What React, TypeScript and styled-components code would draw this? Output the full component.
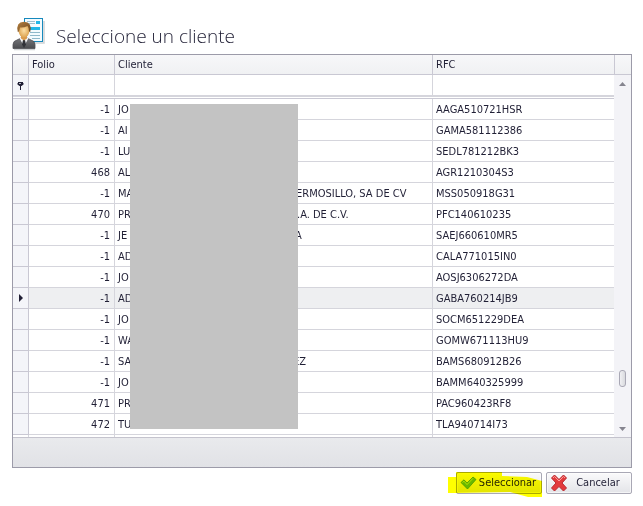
import React from "react";
import styled, { createGlobalStyle } from "styled-components";

const Global = createGlobalStyle`
  * { box-sizing: border-box; }
  body {
    margin: 0;
    background: #fff;
    color: #201f35;
    font-family: "DejaVu Sans Condensed", "DejaVu Sans", sans-serif;
    font-size: 11px;
    line-height: 14px;
  }
`;

const Dialog = styled.main`
  padding: 16px 11px 12px 12px;
`;

const Header = styled.header`
  display: flex;
  align-items: center;
  gap: 11px;
  height: 38px;
`;

const Title = styled.h1`
  margin: 2px 0 0;
  font-family: "Open Sans", "Noto Sans", sans-serif;
  font-weight: 300;
  font-size: 19px;
  line-height: 24px;
`;

const Frame = styled.section`
  position: relative;
  border: 1px solid #9c9ba9;
`;

const GridArea = styled.div`
  display: flex;
`;

const Table = styled.table`
  flex: 1;
  min-width: 0;
  border-collapse: separate;
  border-spacing: 0;
  table-layout: fixed;
`;

const Col = styled.col<{ $w?: number }>`
  width: ${(p) => (p.$w ? `${p.$w}px` : "auto")};
`;

const HeadCell = styled.th`
  height: 20px;
  padding: 0 3px;
  text-align: left;
  font-weight: 400;
  background: linear-gradient(#f7f7f9, #f0f1f3);
  border-right: 1px solid #c9c8d3;
  border-bottom: 1px solid #c9c8d3;

  &:last-child { border-right: 0; }
`;

const Cell = styled.td<{ $right?: boolean }>`
  height: 21px;
  padding: 2px 4px 0 3px;
  text-align: ${(p) => (p.$right ? "right" : "left")};
  white-space: pre;
  overflow: hidden;
  border-right: 1px solid #d5d5dc;
  border-bottom: 1px solid #d5d5dc;

  &:last-child { border-right: 0; }
`;

const Marker = styled.td`
  height: 21px;
  padding: 0;
  text-align: center;
  background: #f4f5f9;
  border-right: 1px solid #c9c8d3;
  border-bottom: 1px solid #c9c8d3;

  svg { display: block; margin: 0 auto; }
`;

const Row = styled.tr<{ $current?: boolean }>`
  background: ${(p) => (p.$current ? "#eeeff1" : "#fff")};
`;

const Divider = styled.td`
  height: 3px;
  padding: 0;
  border-top: 1px solid #d5d5dc;
  border-bottom: 1px solid #c9c8d3;
`;

const Tail = styled.td`
  height: 2px;
  padding: 0;
  border-right: 1px solid #d5d5dc;

  &:last-child { border-right: 0; }
`;

const FilterInput = styled.input`
  display: block;
  width: 100%;
  height: 18px;
  padding: 0;
  border: 0;
  outline: 0;
  background: transparent;
  font: inherit;
  color: inherit;
`;

const Lead = styled.span<{ $w: number }>`
  display: inline-block;
  width: ${(p) => p.$w}px;
`;

const Scroll = styled.div`
  display: flex;
  flex-direction: column;
  width: 17px;
  background: #f3f3f7;
`;

const ScrollHead = styled.div`
  height: 20px;
  background: linear-gradient(#f7f7f9, #f0f1f3);
  border-left: 1px solid #c9c8d3;
  border-bottom: 1px solid #c9c8d3;
`;

const ScrollButton = styled.button`
  display: flex;
  align-items: center;
  justify-content: center;
  height: 17px;
  padding: 0;
  border: 0;
  background: transparent;
`;

const Track = styled.div`
  flex: 1;
  display: flex;
  flex-direction: column;
  align-items: center;
  justify-content: flex-end;
  padding-bottom: 33px;
`;

const Thumb = styled.div`
  width: 7px;
  height: 17px;
  border: 1px solid #a9a8b5;
  border-radius: 3px;
  background: linear-gradient(90deg, #f0f0f3, #d9dade);
`;

const Footer = styled.div`
  height: 30px;
  border-top: 1px solid #c4c3cd;
  background: linear-gradient(#e9eaed, #e1e2e6);
`;

const Redaction = styled.div`
  position: absolute;
  top: 49px;
  left: 117px;
  width: 168px;
  height: 325px;
  background: #c3c3c3;
`;

const Actions = styled.div`
  position: relative;
  display: flex;
  justify-content: flex-end;
  gap: 4px;
  margin-top: 4px;
`;

const Button = styled.button`
  display: flex;
  align-items: center;
  width: 86px;
  height: 22px;
  padding: 0 3px;
  border: 1px solid #a9a8b5;
  border-radius: 2px;
  background: linear-gradient(#fafafb, #e3e4e8);
  box-shadow: inset 0 0 0 1px #ffffff99;
  color: inherit;
  font: inherit;

  svg { flex: none; }
`;

const Label = styled.span`
  flex: 1;
  text-align: center;
  white-space: nowrap;
`;

const Marking = styled.svg`
  position: absolute;
  right: 89px;
  top: 0;
  mix-blend-mode: multiply;
  pointer-events: none;
`;

type Client = { folio: string; start: string; end?: string; lead?: number; rfc: string; current?: boolean };

const clients: Client[] = [
  { folio: "-1", start: "JO", rfc: "AAGA510721HSR" },
  { folio: "-1", start: "AI", rfc: "GAMA581112386" },
  { folio: "-1", start: "LU", rfc: "SEDL781212BK3" },
  { folio: "468", start: "AL", rfc: "AGR1210304S3" },
  { folio: "-1", start: "MA", end: "ERMOSILLO, SA DE CV", lead: 178, rfc: "MSS050918G31" },
  { folio: "470", start: "PR", end: ".A. DE C.V.", lead: 179, rfc: "PFC140610235" },
  { folio: "-1", start: "JE", end: "A", lead: 177, rfc: "SAEJ660610MR5" },
  { folio: "-1", start: "AD", rfc: "CALA771015IN0" },
  { folio: "-1", start: "JO", rfc: "AOSJ6306272DA" },
  { folio: "-1", start: "AD", rfc: "GABA760214JB9", current: true },
  { folio: "-1", start: "JO", rfc: "SOCM651229DEA" },
  { folio: "-1", start: "WA", rfc: "GOMW671113HU9" },
  { folio: "-1", start: "SA", end: "EZ", lead: 175, rfc: "BAMS680912B26" },
  { folio: "-1", start: "JO", rfc: "BAMM640325999" },
  { folio: "471", start: "PR", rfc: "PAC960423RF8" },
  { folio: "472", start: "TU", rfc: "TLA940714I73" },
];

const ClientIcon = () => (
  <svg width="33" height="34" viewBox="0 0 33 34" aria-hidden="true">
    <defs>
      <linearGradient id="suit" x1="0" y1="0" x2="0" y2="1">
        <stop offset="0" stopColor="#77787c" />
        <stop offset="1" stopColor="#4b4c50" />
      </linearGradient>
      <linearGradient id="hair" x1="0" y1="0" x2="1" y2="1">
        <stop offset="0" stopColor="#b5803f" />
        <stop offset="1" stopColor="#6b451d" />
      </linearGradient>
      <radialGradient id="face">
        <stop offset="0" stopColor="#fde0a6" />
        <stop offset="1" stopColor="#dda452" />
      </radialGradient>
    </defs>
    <path d="M2 31.500h21M14 25h18V3" stroke="#cfd2d4" strokeWidth="1.500" fill="none" />
    <rect x="12.500" y=".5" width="18" height="23" fill="#f4fbfe" stroke="#1689bd" />
    <path d="M15 3.500h8M15 5.500h8" stroke="#9fbfcd" />
    <rect x="24" y="3" width="4" height="3" fill="#21b6e7" />
    <rect x="15" y="9" width="13" height="3" fill="#21b6e7" />
    <path d="M18 14.500h10M18 17.500h10M20 20.500h8" stroke="#8fb9ca" />
    <path d="M1 30.500v-4q0-3.500 4-4.500l4-2h6l4 2q4 1 4 4.500v4z" fill="url(#suit)" stroke="#505155" strokeWidth=".8" />
    <path d="M7.500 20l4.500 8.500 4.500-8.500z" fill="#f5f6f8" />
    <path d="M11 22h2l1 4.500-2 3.500-2-3.500z" fill="#303238" />
    <path d="M9 17h6v3.500l-3 2-3-2z" fill="#d99b4d" />
    <ellipse cx="12" cy="12.500" rx="5.500" ry="7" fill="url(#face)" />
    <path d="M5.800 14Q3.500 4 12 3.800 20.500 4 18.200 14l-1.200-.5q.2-3.500-1.500-5.500-4 2-7.500 1.500l-1 4z" fill="url(#hair)" />
  </svg>
);

const FilterIcon = () => (
  <svg width="7" height="9" viewBox="0 0 7 9" aria-hidden="true">
    <path d="M1 1h5v1h.5v1.500L4.500 5H4v4H3V5h-.5L.5 3.500V2H1z" fill="#201f35" />
    <path d="M2 2h2v1H2z" fill="#b9b9c4" />
  </svg>
);

const CurrentIcon = () => (
  <svg width="4" height="8" viewBox="0 0 4 8" aria-hidden="true">
    <path d="M0 0l4 4-4 4z" fill="#201f35" />
  </svg>
);

const Caret = ({ down }: { down?: boolean }) => (
  <svg width="7" height="4" viewBox="0 0 7 4" aria-hidden="true">
    <path d={down ? "M0 0h7L3.500 4z" : "M0 4h7L3.500 0z"} fill="#85848f" />
  </svg>
);

const CheckIcon = () => (
  <svg width="17" height="16" viewBox="0 0 17 16" aria-hidden="true">
    <path d="M1 7.500L4 4.800l3 3.200L13 2l3 2.500L7.500 14z" fill="#69b936" stroke="#4a9a28" strokeWidth=".8" strokeLinejoin="round" />
    <path d="M2.500 7.500L4 6.200l3 3.400L13 3.300" stroke="#b8e384" fill="none" />
  </svg>
);

const CrossIcon = () => (
  <svg width="18" height="18" viewBox="0 0 18 18" aria-hidden="true">
    <path d="M1.500 4l3-3L9 5.500 13.500 1l3 3L12 9l4.500 5-3 3L9 12.500 4.500 17l-3-3L6 9z" fill="#e33a3c" stroke="#b92a30" strokeLinejoin="round" />
    <path d="M3 4l1.500-1.500L9 7l4.500-4.500L15 4" fill="none" stroke="#ff9d97" />
  </svg>
);

export default function App() {
  return (
    <Dialog>
      <Global />
      <Header>
        <ClientIcon />
        <Title>Seleccione un cliente</Title>
      </Header>
      <Frame>
        <GridArea>
          <Table>
            <colgroup>
              <Col $w={16} />
              <Col $w={86} />
              <Col $w={318} />
              <Col />
            </colgroup>
            <thead>
              <tr>
                <HeadCell />
                <HeadCell scope="col">Folio</HeadCell>
                <HeadCell scope="col">Cliente</HeadCell>
                <HeadCell scope="col">RFC</HeadCell>
              </tr>
            </thead>
            <tbody>
              <Row>
                <Marker><FilterIcon /></Marker>
                <Cell><FilterInput aria-label="Filtrar Folio" /></Cell>
                <Cell><FilterInput aria-label="Filtrar Cliente" /></Cell>
                <Cell><FilterInput aria-label="Filtrar RFC" /></Cell>
              </Row>
              <tr><Divider colSpan={4} /></tr>
              {clients.map((c) => (
                <Row key={c.rfc} $current={c.current}>
                  <Marker>{c.current && <CurrentIcon />}</Marker>
                  <Cell $right>{c.folio}</Cell>
                  <Cell>
                    {c.end ? <Lead $w={c.lead ?? 180}>{c.start}</Lead> : c.start}
                    {c.end}
                  </Cell>
                  <Cell>{c.rfc}</Cell>
                </Row>
              ))}
              <tr><Tail /><Tail /><Tail /><Tail /></tr>
            </tbody>
          </Table>
          <Scroll>
            <ScrollHead />
            <ScrollButton aria-label="Subir"><Caret /></ScrollButton>
            <Track><Thumb /></Track>
            <ScrollButton aria-label="Bajar"><Caret down /></ScrollButton>
          </Scroll>
        </GridArea>
        <Footer />
        <Redaction />
      </Frame>
      <Actions>
        <Button><CheckIcon /><Label>Seleccionar</Label></Button>
        <Button><CrossIcon /><Label>Cancelar</Label></Button>
        <Marking width="95" height="26" viewBox="0 0 95 26" aria-hidden="true">
          <path d="M8 0h46v4l25 1 15 4v16H80l-18-5-54 1H0V5h8z" fill="#ffff00" />
        </Marking>
      </Actions>
    </Dialog>
  );
}
